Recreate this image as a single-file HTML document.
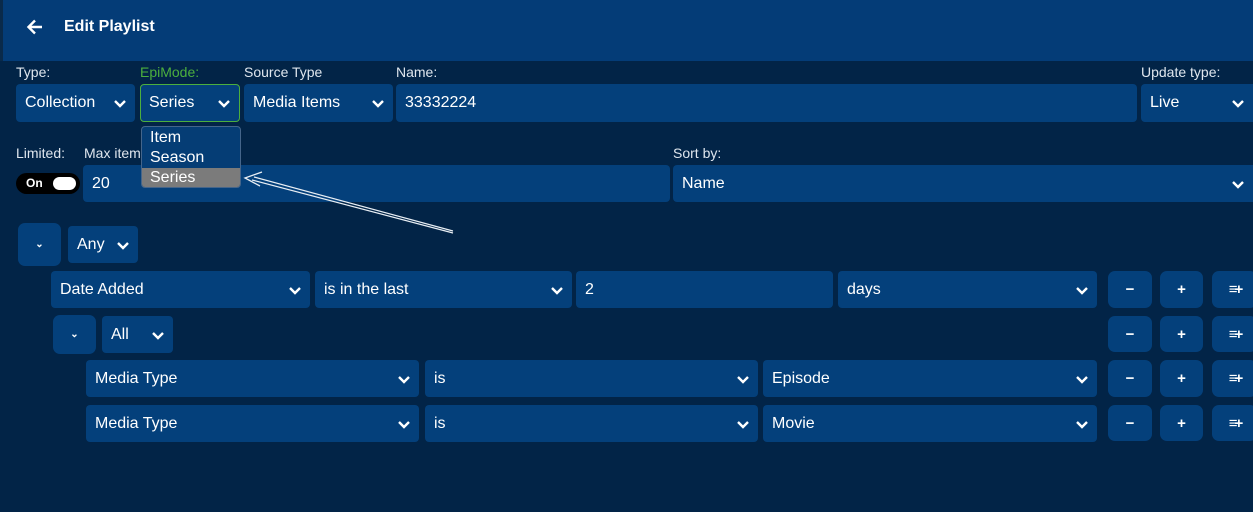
<!DOCTYPE html>
<html><head><style>
*{box-sizing:border-box;margin:0;padding:0}
body{width:1253px;height:512px;background:#022447;font-family:"Liberation Sans",sans-serif;color:#fff;position:relative;overflow:hidden}
.hdr{position:absolute;left:0;top:0;width:1253px;height:61px;background:#043c77;border-left:3px solid #0a2a4a}
.hdr .t{position:absolute;left:61px;top:18px;font-weight:bold;font-size:16px}
.lbl{position:absolute;font-size:14px;color:#dfe6ee}
.f{position:absolute;background:#04407b;border-radius:4px;font-size:16px;padding-left:9px;display:flex;align-items:center}
.f svg{position:absolute;right:8px;top:50%;margin-top:-4px}
.b{position:absolute;background:#04407b;border-radius:7px;display:flex;align-items:center;justify-content:center;font-size:15px;font-weight:bold}
.q{font-size:15px;letter-spacing:-3px}
</style></head><body>
<div class="hdr"><svg style="position:absolute;left:22px;top:17px" width="20" height="20" viewBox="0 0 20 20"><path d="M17 10H4M10 3.5L3.5 10 10 16.5" stroke="#fff" stroke-width="2.4" fill="none"/></svg><div class="t">Edit Playlist</div></div>
<div class="lbl" style="left:16px;top:64px">Type:</div>
<div class="lbl" style="left:140px;top:64px;color:#4caf3e">EpiMode:</div>
<div class="lbl" style="left:244px;top:64px">Source Type</div>
<div class="lbl" style="left:396px;top:64px">Name:</div>
<div class="lbl" style="left:1141px;top:64px">Update type:</div>
<svg width="0" height="0" style="position:absolute"><defs><symbol id="c" viewBox="0 0 14 9"><path d="M2 2l5 5 5-5" stroke="#fff" stroke-width="2.4" fill="none"/></symbol></defs></svg>
<div class="f" style="left:16px;top:84px;width:119px;height:38px">Collection<svg width="14" height="9"><use href="#c"/></svg></div>
<div class="f" style="left:140px;top:84px;width:100px;height:38px;border:1px solid #4caf3e;padding-left:8px">Series<svg width="14" height="9"><use href="#c"/></svg></div>
<div class="f" style="left:244px;top:84px;width:149px;height:38px">Media Items<svg width="14" height="9"><use href="#c"/></svg></div>
<div class="f" style="left:396px;top:84px;width:741px;height:38px">33332224</div>
<div class="f" style="left:1141px;top:84px;width:120px;height:38px">Live<svg width="14" height="9" style="right:16px"><use href="#c"/></svg></div>
<div class="lbl" style="left:16px;top:145px">Limited:</div>
<div class="lbl" style="left:84px;top:145px">Max items</div>
<div class="lbl" style="left:673px;top:145px">Sort by:</div>
<div style="position:absolute;left:16px;top:173px;width:64px;height:21px;background:#000;border-radius:11px;font-size:12px;font-weight:bold;padding:3px 0 0 10px">On<div style="position:absolute;left:37px;top:4px;width:23px;height:13px;background:#fff;border-radius:7px"></div></div>
<div class="f" style="left:83px;top:165px;width:587px;height:37px">20</div>
<div class="f" style="left:673px;top:165px;width:590px;height:37px">Name<svg width="14" height="9" style="right:18px"><use href="#c"/></svg></div>
<div style="position:absolute;left:141px;top:126px;width:100px;height:62px;background:#053d75;border:1px solid #45658a;border-radius:4px;font-size:16px;line-height:20px;overflow:hidden">
<div style="padding-left:8px;margin-top:1px">Item</div><div style="padding-left:8px">Season</div><div style="padding-left:8px;background:#7b7b7b">Series</div></div>
<svg style="position:absolute;left:0;top:0" width="1253" height="512"><path d="M453 233L252 180M453 231L254 177" stroke="#e8eef4" stroke-width="1.2" fill="none"/><path d="M262 172L245 178 260 186" stroke="#e8eef4" stroke-width="1.3" fill="none"/></svg>
<div class="b" style="left:18px;top:223px;width:43px;height:43px;font-size:10px">⌄</div>
<div class="f" style="left:68px;top:226px;width:70px;height:37px">Any<svg width="14" height="9"><use href="#c"/></svg></div>
<div class="f" style="left:51px;top:271px;width:259px;height:37px">Date Added<svg width="14" height="9"><use href="#c"/></svg></div>
<div class="f" style="left:315px;top:271px;width:257px;height:37px">is in the last<svg width="14" height="9"><use href="#c"/></svg></div>
<div class="f" style="left:576px;top:271px;width:257px;height:37px">2</div>
<div class="f" style="left:838px;top:271px;width:259px;height:37px">days<svg width="14" height="9"><use href="#c"/></svg></div>
<div class="b" style="left:53px;top:315px;width:43px;height:39px;font-size:10px">⌄</div>
<div class="f" style="left:102px;top:316px;width:71px;height:37px">All<svg width="14" height="9"><use href="#c"/></svg></div>
<div class="f" style="left:86px;top:360px;width:333px;height:37px">Media Type<svg width="14" height="9"><use href="#c"/></svg></div>
<div class="f" style="left:425px;top:360px;width:333px;height:37px">is<svg width="14" height="9"><use href="#c"/></svg></div>
<div class="f" style="left:763px;top:360px;width:334px;height:37px">Episode<svg width="14" height="9"><use href="#c"/></svg></div>
<div class="f" style="left:86px;top:405px;width:333px;height:37px">Media Type<svg width="14" height="9"><use href="#c"/></svg></div>
<div class="f" style="left:425px;top:405px;width:333px;height:37px">is<svg width="14" height="9"><use href="#c"/></svg></div>
<div class="f" style="left:763px;top:405px;width:334px;height:37px">Movie<svg width="14" height="9"><use href="#c"/></svg></div>
<div class="b" style="left:1108px;top:271px;width:44px;height:37px">−</div><div class="b" style="left:1160px;top:271px;width:43px;height:37px">+</div><div class="b q" style="left:1212px;top:271px;width:45px;height:37px">≡+</div>
<div class="b" style="left:1108px;top:316px;width:44px;height:36px">−</div><div class="b" style="left:1160px;top:316px;width:43px;height:36px">+</div><div class="b q" style="left:1212px;top:316px;width:45px;height:36px">≡+</div>
<div class="b" style="left:1108px;top:360px;width:44px;height:37px">−</div><div class="b" style="left:1160px;top:360px;width:43px;height:37px">+</div><div class="b q" style="left:1212px;top:360px;width:45px;height:37px">≡+</div>
<div class="b" style="left:1108px;top:405px;width:44px;height:36px">−</div><div class="b" style="left:1160px;top:405px;width:43px;height:36px">+</div><div class="b q" style="left:1212px;top:405px;width:45px;height:36px">≡+</div>
</body></html>
